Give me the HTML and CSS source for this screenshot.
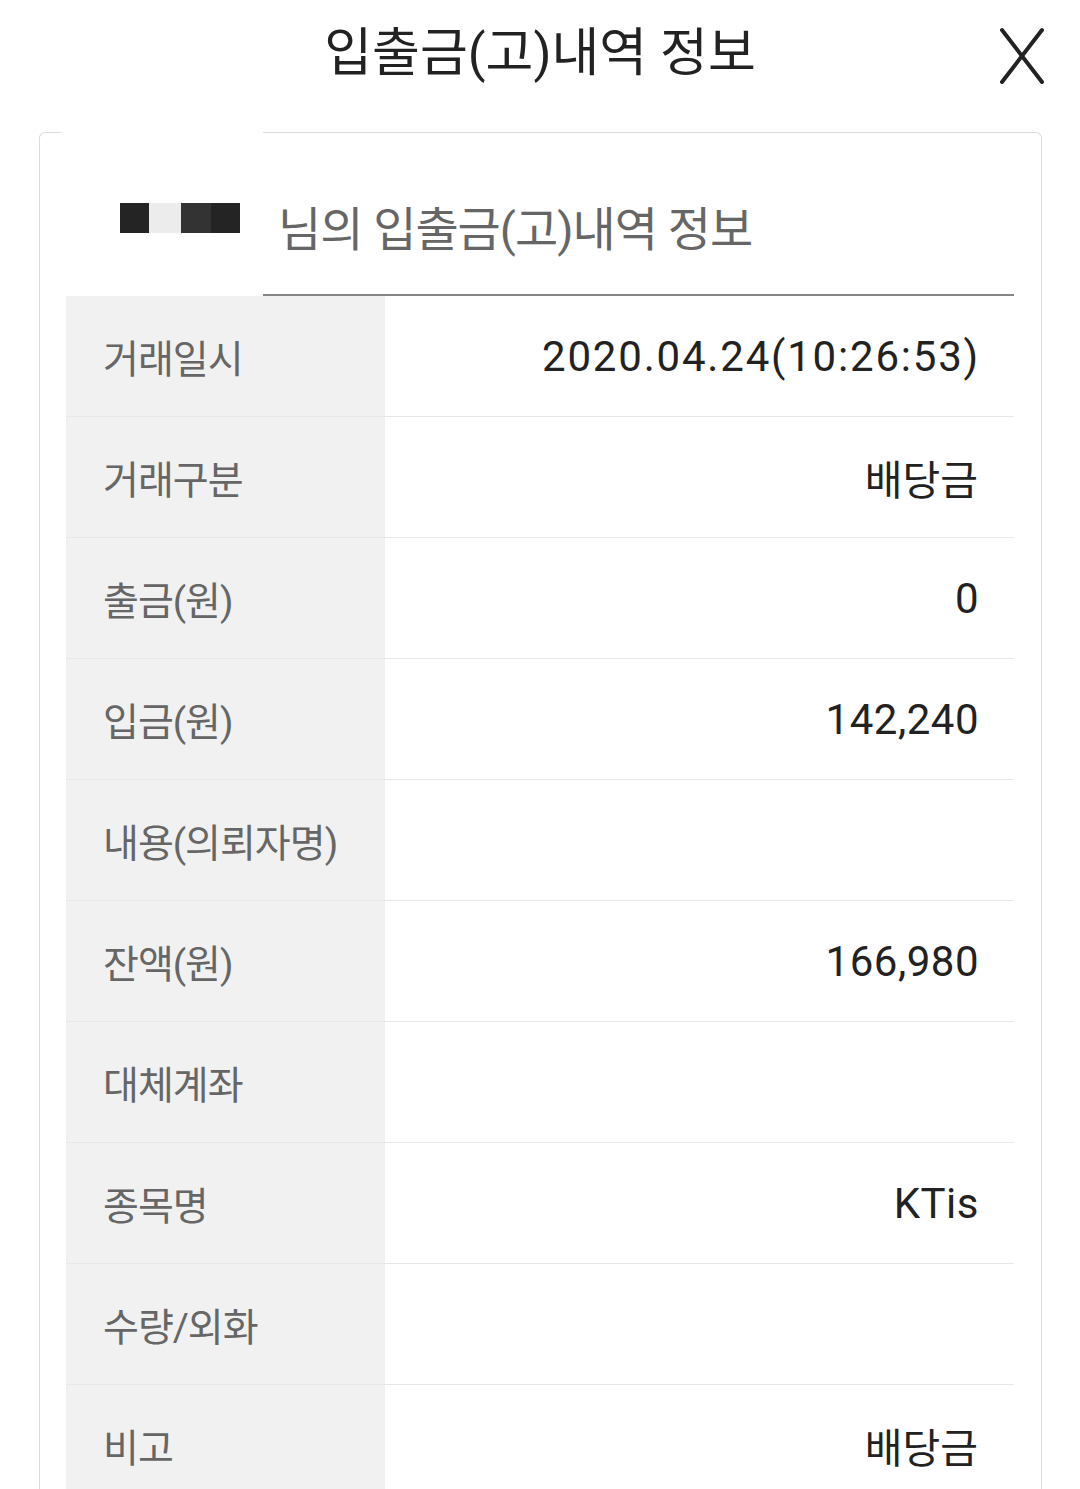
FILE: index.html
```html
<!DOCTYPE html>
<html lang="ko">
<head>
  <meta charset="UTF-8">
  <title>입출금(고)내역 정보</title>
  <link rel="stylesheet" href="styles.css">
</head>
<body>
  <div class="topbar">
    <h1 class="titulo">입출금(고)내역 정보</h1>
    <button class="fechar" aria-label="닫기">
      <svg width="46" height="58" viewBox="0 0 46 58">
        <path d="M3 3 L43 55 M43 3 L3 55" stroke="#222" stroke-width="4" stroke-linecap="round" fill="none"/>
      </svg>
    </button>
  </div>

  <div class="card">
    <div class="cabecalho">
      <div class="quem">
        <span class="bloco escuro"></span><span class="bloco claro"></span><span class="bloco medio"></span><span class="bloco escuro"></span>
      </div>
      <div class="subtitulo">님의 입출금(고)내역 정보</div>
    </div>

    <div class="tabela">
      <div class="linha"><span class="label">거래일시</span><span class="valor num data">2020.04.24(10:26:53)</span></div>
      <div class="linha"><span class="label">거래구분</span><span class="valor">배당금</span></div>
      <div class="linha"><span class="label">출금(원)</span><span class="valor num">0</span></div>
      <div class="linha"><span class="label">입금(원)</span><span class="valor num">142,240</span></div>
      <div class="linha"><span class="label">내용(의뢰자명)</span><span class="valor"></span></div>
      <div class="linha"><span class="label">잔액(원)</span><span class="valor num">166,980</span></div>
      <div class="linha"><span class="label">대체계좌</span><span class="valor"></span></div>
      <div class="linha"><span class="label">종목명</span><span class="valor num">KTis</span></div>
      <div class="linha"><span class="label">수량/외화</span><span class="valor"></span></div>
      <div class="linha"><span class="label">비고</span><span class="valor">배당금</span></div>
    </div>
  </div>
</body>
</html>
```

FILE: styles.css
```css
body {
  margin: 0;
  background: #fff;
  font-family: Roboto, "Noto Sans CJK KR", sans-serif;
  color: #222;
}
.topbar {
  position: relative;
  height: 132px;
  display: flex;
  justify-content: center;
  align-items: flex-start;
}
.titulo {
  margin: 22px 0 0;
  font-size: 52px;
  font-weight: 400;
  line-height: 64px;
  letter-spacing: 0;
  color: #222;
}
.fechar {
  position: absolute;
  right: 35px;
  top: 27px;
  padding: 0;
  border: 0;
  background: none;
  line-height: 0;
}
.card {
  margin: 0 38px 0 39px;
  border: 1px solid #dcdcdc;
  border-bottom: none;
  border-radius: 6px 6px 0 0;
  padding: 0 27px 0 26px;
  background: #fff;
}
.cabecalho {
  display: flex;
  height: 163px;
}
.quem {
  margin: -1px 0 0 -5px;
  width: 202px;
  background: #fff;
  display: flex;
  align-items: center;
  padding-left: 59px;
  padding-top: 8px;
  box-sizing: border-box;
}
.bloco {
  display: inline-block;
  width: 29px;
  height: 30px;
}
.escuro { background: #242424; }
.claro { background: #ececec; width: 32px; }
.medio { background: #333; width: 30px; }
.subtitulo {
  flex: 1;
  border-bottom: 2px solid #858585;
  display: flex;
  align-items: center;
  padding: 24px 0 0 15px;
  font-size: 47px;
  letter-spacing: -1px;
  color: #666;
}
.linha {
  display: grid;
  grid-template-columns: 319px 1fr;
  height: 120px;
  border-bottom: 1px solid #e8e8e8;
}
.label {
  background: #f1f1f1;
  display: flex;
  align-items: center;
  padding-left: 37px;
  font-size: 39px;
  letter-spacing: -1px;
  color: #666;
}
.valor {
  display: flex;
  align-items: center;
  justify-content: flex-end;
  padding-right: 36px;
  font-size: 41px;
  letter-spacing: 0;
  color: #222;
}
.valor.num {
  font-size: 42px;
  letter-spacing: 0.5px;
  padding-right: 35px;
}
.valor.data {
  letter-spacing: 1.8px;
  padding-right: 34px;
}
```
